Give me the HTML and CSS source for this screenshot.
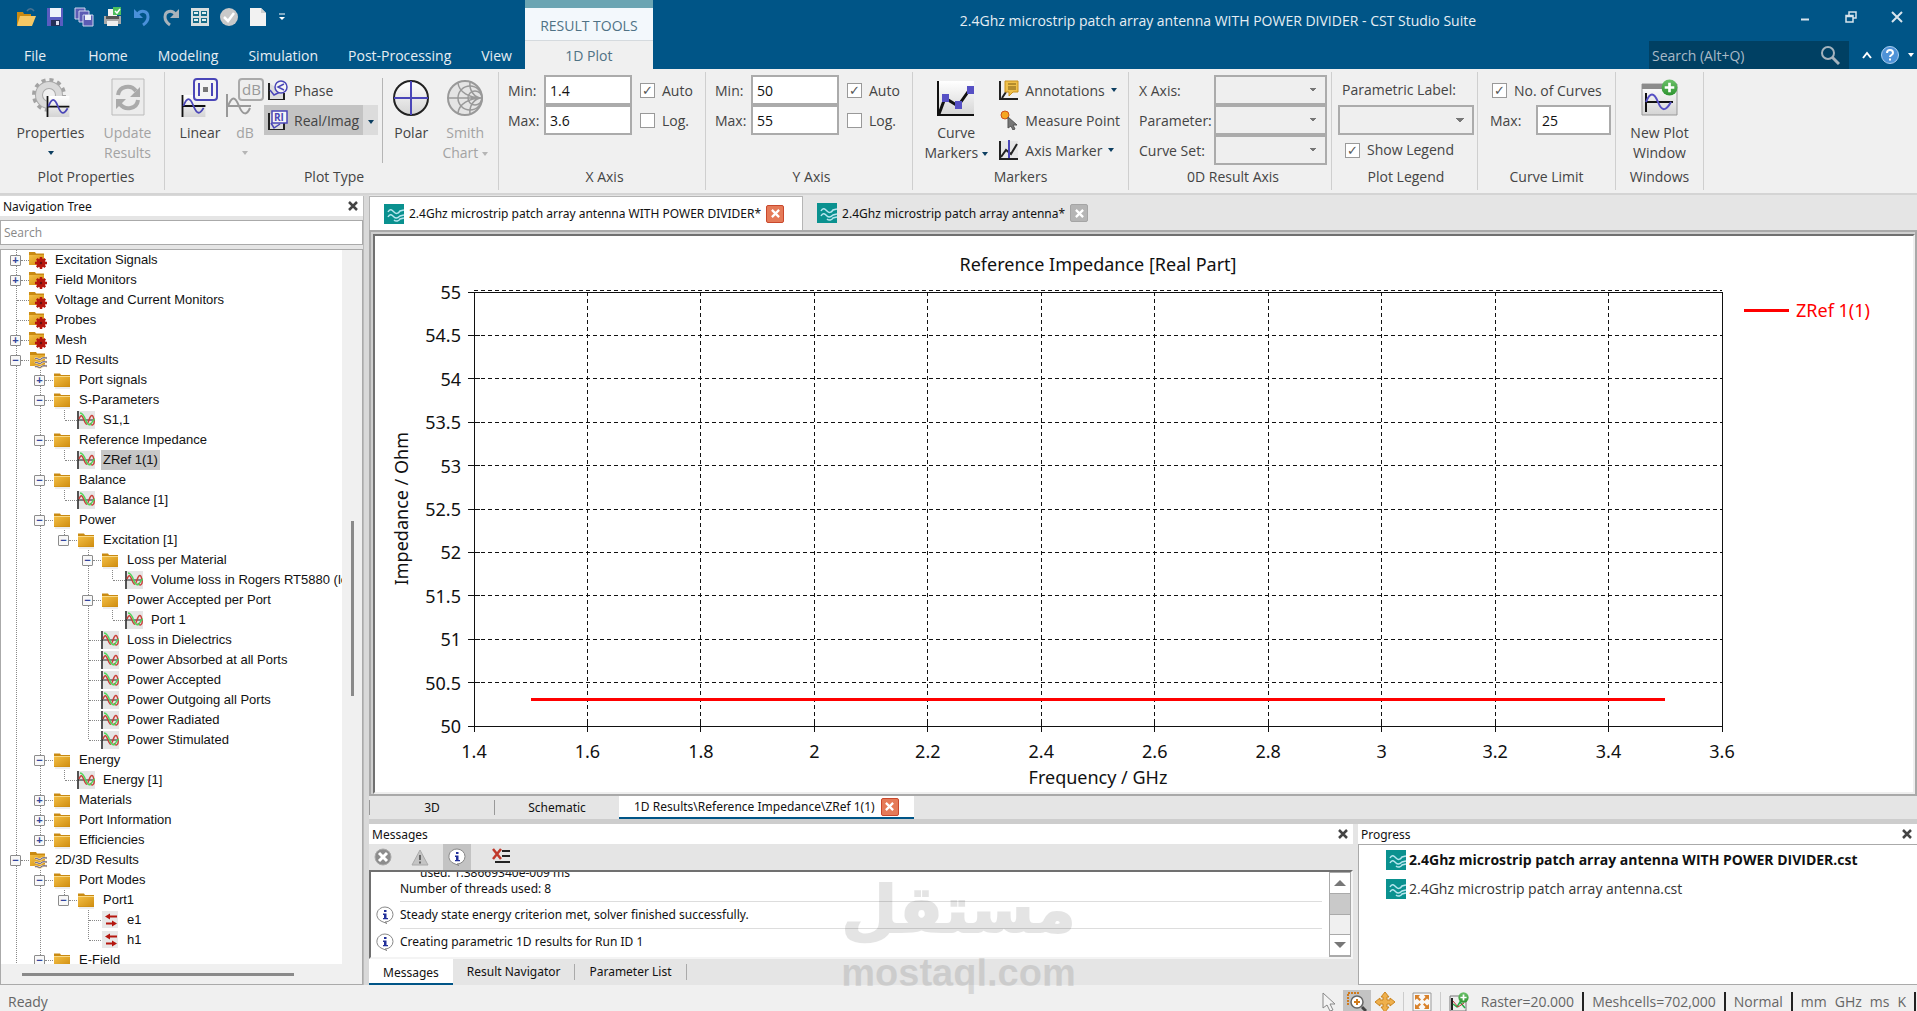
FILE: index.html
```html
<!DOCTYPE html>
<html lang="en">
<head>
    <meta charset="UTF-8">
    <meta name="viewport" content="width=device-width, initial-scale=1.0">
    <title>2.4Ghz microstrip patch array antenna WITH POWER DIVIDER - CST Studio Suite</title>
    <link rel="stylesheet" href="styles.css">
</head>
<body>
    <!-- shared icons -->
    <svg class="sprite" aria-hidden="true">
        <defs>
            <linearGradient id="gold" x1="0" y1="0" x2="1" y2="1">
                <stop offset="0" stop-color="#f4bf45"/><stop offset="1" stop-color="#d08e10"/>
            </linearGradient>
            <linearGradient id="silver" x1="0" y1="0" x2="0" y2="1">
                <stop offset="0" stop-color="#ffffff"/><stop offset="1" stop-color="#d4d4d4"/>
            </linearGradient>
            <linearGradient id="green" x1="0" y1="0" x2="0" y2="1">
                <stop offset="0" stop-color="#6cc26a"/><stop offset="1" stop-color="#2e9430"/>
            </linearGradient>
        </defs>
        <symbol id="folder" viewBox="0 0 18 18">
            <path d="M1 4V2.500h6l1 1.500h9V16H1z" fill="#c98a12"/>
            <path d="M1 5h16v10.500H1z" fill="url(#gold)"/>
            <path d="M1 5.500h16" stroke="#f8d987"/>
            <path d="M2 17h15" stroke="#ddd"/>
        </symbol>
        <symbol id="folder-gear" viewBox="0 0 18 18">
            <path d="M0 3V1h6l1 1.500h8V14H0z" fill="#c98a12"/>
            <path d="M0 4h15v10H0z" fill="url(#gold)"/>
            <path d="M12 6v12M6 12h12M7.800 7.800l8.400 8.400M16.200 7.800l-8.400 8.400" stroke="#b5170f" stroke-width="2.500"/>
            <circle cx="12" cy="12" r="3" fill="none" stroke="#b5170f" stroke-width="3"/>
            <circle cx="12" cy="12" r="1.200" fill="#611"/>
        </symbol>
        <symbol id="folder-wave" viewBox="0 0 18 18">
            <path d="M1 3V1h6l1 1.500h8V15H1z" fill="#c98a12"/>
            <path d="M1 4h15v11H1z" fill="url(#gold)"/>
            <path d="M6 8c2-2 4 2 6 0s4-1 6-1M6 12c2-2 4 2 6 0s4-1 6-1M6 16c2-2 4 2 6 0s4-1 6-1" fill="none" stroke="#f6dc9a" stroke-width="2.500"/>
            <path d="M6 8c2-2 4 2 6 0s4-1 6-1M6 12c2-2 4 2 6 0s4-1 6-1M6 16c2-2 4 2 6 0s4-1 6-1" fill="none" stroke="#4a4f9c"/>
        </symbol>
        <symbol id="curve" viewBox="0 0 18 18">
            <path d="M0 0h18v18H0z" fill="#e6e6e6"/>
            <path d="M1 0v18" stroke="#222" stroke-width="1.500"/>
            <path d="M1 9h17" stroke="#222"/>
            <path d="M2 8c2-5 3-4 5 1s3 6 5 0 4-6 5 0-3 6-4 3" fill="none" stroke="#c8423a" stroke-width="1.500"/>
            <path d="M3 2c3 0 5 5 6 8s4 5 5 3 2-4 4-5" fill="none" stroke="#4fd65c" stroke-width="1.500"/>
        </symbol>
        <symbol id="mode" viewBox="0 0 18 18">
            <path d="M1 0h16v17H1z" fill="#e8e8e8"/>
            <path d="M4 5.500l5-3v2h7v2H9v2zM16 12.500l-5-3v2H5v2h6v2z" fill="#b5170f"/>
        </symbol>
        <symbol id="cst" viewBox="0 0 20 20">
            <path d="M0 0h20v20H0z" fill="#0a918f"/>
            <path d="M4 8c2-4 4-2 6 0s4 2 6-1l4-1M4 13c2-4 4-2 6 0s4 1 6-1l4-1M10 16c2 2 5 1 6-1l4-1" fill="none" stroke="#b7e6ef" stroke-width="1.500"/>
        </symbol>
        <symbol id="cross" viewBox="0 0 10 10">
            <path d="M1 1l8 8M9 1l-8 8" stroke="currentColor" stroke-width="2.500"/>
        </symbol>
        <symbol id="info" viewBox="0 0 18 18">
            <path d="M9 1a8 7.500 0 1 1 0 15l2 1.500-5-2A8 7.500 0 0 1 9 1z" fill="#fff" stroke="#888"/>
            <path d="M8 4h2.500v2H8zM7 7.500h3.500V12H12v1.200H7V12h1V9H7z" fill="#22309a"/>
        </symbol>
        <symbol id="plus" viewBox="0 0 16 16">
            <circle cx="8" cy="8" r="7.500" fill="url(#green)"/>
            <path d="M8 3.500v9M3.500 8h9" stroke="#fff" stroke-width="2.500"/>
        </symbol>
        <symbol id="sine" viewBox="0 0 26 24">
            <path d="M0 0h26v24H0z" fill="url(#silver)"/>
            <path d="M1 0v24M0 12h26" stroke="#111" stroke-width="2"/>
            <path d="M2 12C6 2 9 2 13 12s7 9 11 2" fill="none" stroke="#4a46b8" stroke-width="2"/>
        </symbol>
    </svg>

    <header class="titlebar">
        <div class="quick">
            <button aria-label="Open"><svg viewBox="0 0 20 20"><path d="M1 5h6l1 2h7v11H1z" fill="#c98a12"/><path d="M4 9h16l-4 10H1z" fill="#f5c865"/><path d="M11 4c2-3 5-3 7 0" fill="none" stroke="#4c7391" stroke-width="1.500"/></svg></button>
            <button aria-label="Save"><svg viewBox="0 0 20 20"><path d="M2 1h16v18H2z" fill="#5a5cc0"/><path d="M5 1h11v9H5z" fill="#eef3fa"/><path d="M6 13h9v6H6z" fill="#253058"/><path d="M11 14h3v4h-3z" fill="#dde"/></svg></button>
            <button aria-label="Save all"><svg viewBox="0 0 20 20"><path d="M1 1h10v11H1z" fill="#5b5cb4" stroke="#cdd6ef"/><path d="M5 4h10v11H5z" fill="#5b5cb4" stroke="#cdd6ef"/><path d="M9 8h10v11H9z" fill="#5b5cb4" stroke="#cdd6ef"/><path d="M11 8h6v5h-6z" fill="#eef3fa"/></svg></button>
            <button aria-label="Print"><svg viewBox="0 0 20 20"><path d="M5 2h9v8H5z" fill="#f4f4f4"/><path d="M1 9h17v8H1z" fill="#a9a9a9"/><path d="M3 9h13v3H3z" fill="#555"/><path d="M4 14h11v5H4z" fill="#eee"/><path d="M10 0h8v8h-8z" fill="#4cbf5c"/><path d="M12 4l2 2 3-4" fill="none" stroke="#fff" stroke-width="1.500"/></svg></button>
            <button aria-label="Undo"><svg viewBox="0 0 20 20"><path d="M5 8c4-6 11-4 11 2 0 4-2 6-5 8" fill="none" stroke="#4a90d9" stroke-width="3"/><path d="M2 2v9h9z" fill="#4a90d9"/></svg></button>
            <button aria-label="Redo"><svg viewBox="0 0 20 20"><path d="M15 8C11 2 4 4 4 10c0 4 2 6 5 8" fill="none" stroke="#a9b3bb" stroke-width="3"/><path d="M18 2v9H9z" fill="#a9b3bb"/></svg></button>
            <button aria-label="Parameters"><svg viewBox="0 0 20 20"><path d="M1 1h18v18H1z" fill="#d9dedf"/><path d="M3 4h6v5H3zM11 4h6v5h-6zM3 11h6v5H3zM11 11h6v5h-6z" fill="#176b87"/><path d="M4 6h4M12 6h4M4 13h4M12 13h4" stroke="#dfeff2" stroke-width="2"/></svg></button>
            <button aria-label="Check"><svg viewBox="0 0 20 20"><circle cx="10" cy="10" r="9" fill="#c9c9c9"/><path d="M5 10l4 4 6-8" fill="none" stroke="#fff" stroke-width="2.500"/></svg></button>
            <button aria-label="New"><svg viewBox="0 0 20 20"><path d="M2 1h11l5 5v13H2z" fill="#f2f2f2"/><path d="M13 1v5h5" fill="#cfcfcf"/></svg></button>
            <button aria-label="Customize" class="tiny"><svg viewBox="0 0 10 10"><path d="M2 2h6" stroke="#fff"/><path d="M2 5h6L5 8z" fill="#fff"/></svg></button>
        </div>
        <h1 class="window-title">2.4Ghz microstrip patch array antenna WITH POWER DIVIDER - CST Studio Suite</h1>
        <div class="window-buttons">
            <button aria-label="Minimize"><svg viewBox="0 0 12 12"><path d="M2 8.500h8" stroke="#d8e4ec" stroke-width="2"/></svg></button>
            <button aria-label="Restore"><svg viewBox="0 0 12 12"><path d="M4 4V1h7v6H8M1 4.500h7V11H1zM1 5.500h7" fill="none" stroke="#d8e4ec" stroke-width="1.500"/></svg></button>
            <button aria-label="Close"><svg viewBox="0 0 12 12"><path d="M1 1l10 10M11 1L1 11" stroke="#d8e4ec" stroke-width="2"/></svg></button>
        </div>
        <nav class="menu">
            <a href="#" class="file">File</a>
            <a href="#">Home</a>
            <a href="#">Modeling</a>
            <a href="#">Simulation</a>
            <a href="#">Post-Processing</a>
            <a href="#">View</a>
        </nav>
        <div class="context-tab">
            <span>RESULT TOOLS</span>
            <a href="#">1D Plot</a>
        </div>
        <div class="help">
            <div class="command-search">
                <input type="text" placeholder="Search (Alt+Q)" aria-label="Search commands">
                <svg viewBox="0 0 20 20"><circle cx="8" cy="8" r="6" fill="none" stroke="#a4b3be" stroke-width="2"/><path d="M12 12l7 7" stroke="#a4b3be" stroke-width="3"/></svg>
            </div>
            <button aria-label="Collapse ribbon"><svg width="10" height="10" viewBox="0 0 10 10"><path d="M1 8l4-5 4 5" fill="none" stroke="#fff" stroke-width="2"/></svg></button>
            <button aria-label="Help"><svg width="18" height="18" viewBox="0 0 18 18"><circle cx="9" cy="9" r="8.500" fill="#4f93d8" stroke="#a9cdf0"/><path d="M6 7c0-4 6-4 6 0 0 2-3 2-3 4M9 12.500v2" fill="none" stroke="#fff" stroke-width="2"/></svg></button>
            <span class="caret light"></span>
        </div>
    </header>

    <section class="ribbon">
        <div class="group properties">
            <div class="tools">
                <button class="big">
                    <svg viewBox="0 0 40 40">
                        <circle cx="18" cy="17" r="15" fill="none" stroke="#a3a3a3" stroke-width="4" stroke-dasharray="4 3.850"/>
                        <circle cx="18" cy="17" r="10" fill="none" stroke="#a9a9a9" stroke-width="8"/>
                        <circle cx="18" cy="17" r="10" fill="none" stroke="#d9d9d9" stroke-width="6"/>
                        <use href="#sine" x="15" y="18" width="24" height="21"/>
                    </svg>
                    <span>Properties</span><span class="caret"></span>
                </button>
                <button class="big off">
                    <svg viewBox="0 0 40 40">
                        <path d="M4 1h32v36H4z" fill="#ececec" stroke="#bbb"/>
                        <path d="M10 17c1-9 13-11 18-4M30 22c-1 9-13 11-18 4" fill="none" stroke="#aaa" stroke-width="4"/>
                        <path d="M32 9v10H22zM8 31V21h10z" fill="#aaa"/>
                    </svg>
                    <span>Update<br>Results</span>
                </button>
            </div>
            <h2>Plot Properties</h2>
        </div>

        <div class="group type">
            <div class="tools">
                <button class="big">
                    <svg viewBox="0 0 40 40">
                        <use href="#sine" x="1" y="17" width="25" height="22"/>
                        <rect x="14" y="1" width="23" height="21" rx="3" fill="#f4f4f4" stroke="#4a46b8" stroke-width="2"/>
                        <path d="M19 5v13M32 5v13" stroke="#4a46b8" stroke-width="2"/><path d="M23 9h5v5h-5z" fill="#777"/>
                    </svg>
                    <span>Linear</span>
                </button>
                <button class="big off narrow">
                    <svg viewBox="0 0 40 40">
                        <path d="M2 16v23M1 28h25M3 28c4-10 7-10 11 0s8 9 11 2" fill="none" stroke="#999" stroke-width="2"/>
                        <rect x="14" y="1" width="24" height="21" rx="3" fill="#eee" stroke="#aaa" stroke-width="2"/>
                        <text x="17" y="17" font-size="15" fill="#999">dB</text>
                    </svg>
                    <span>dB</span><span class="caret"></span>
                </button>
                <div class="stack">
                    <button class="small">
                        <svg viewBox="0 0 20 20"><path d="M1 3v17h15v-7" fill="#ddd" stroke="#222" stroke-width="2"/><path d="M2 10l4 5 6-3" fill="none" stroke="#4a46b8" stroke-width="1.500"/><circle cx="13" cy="7" r="6" fill="#f6f6f6" stroke="#4a46b8" stroke-width="1.500"/><path d="M16 4l-6 3 6 3" fill="none" stroke="#4a46b8" stroke-width="1.500"/></svg>
                        Phase
                    </button>
                    <div class="split">
                        <button class="small">
                            <svg viewBox="0 0 20 20"><path d="M1 3v17h15v-7" fill="#ddd" stroke="#222" stroke-width="2"/><path d="M3 13l3 5 6-4" fill="none" stroke="#4a46b8" stroke-width="1.500"/><rect x="4" y="1" width="15" height="12" fill="#f6f6f6" stroke="#4a46b8" stroke-width="1.500"/><text x="6" y="11" font-size="10" font-weight="bold" fill="#4a46b8">RI</text></svg>
                            Real/Imag
                        </button>
                        <button class="more" aria-label="Real/Imag options"><span class="caret"></span></button>
                    </div>
                </div>
                <span class="divider"></span>
                <button class="big polar">
                    <svg viewBox="0 0 40 40"><circle cx="20" cy="20" r="17" fill="url(#silver)" stroke="#222" stroke-width="2"/><path d="M20 3v34M3 20h34" stroke="#4a46b8" stroke-width="2"/></svg>
                    <span>Polar</span>
                </button>
                <button class="big off smith">
                    <svg viewBox="0 0 40 40"><g fill="none" stroke="#999" stroke-width="1.500"><circle cx="20" cy="20" r="17" fill="#e4e4e4" stroke-width="2"/><circle cx="25" cy="20" r="12"/><circle cx="30" cy="20" r="7"/><path d="M3 20h34M37 20C24 20 14 14 13 5M37 20c-13 0-23 6-24 15M37 20C29 20 24 12 25 4M37 20c-8 0-13 8-12 16"/></g></svg>
                    <span>Smith<br>Chart <i class="caret"></i></span>
                </button>
            </div>
            <h2>Plot Type</h2>
        </div>

        <div class="group axis">
            <div class="tools fields">
                <label for="xmin">Min:</label><input type="text" id="xmin" value="1.4"><label class="check"><input type="checkbox" checked>Auto</label>
                <label for="xmax">Max:</label><input type="text" id="xmax" value="3.6"><label class="check"><input type="checkbox">Log.</label>
            </div>
            <h2>X Axis</h2>
        </div>

        <div class="group axis">
            <div class="tools fields">
                <label for="ymin">Min:</label><input type="text" id="ymin" value="50"><label class="check"><input type="checkbox" checked>Auto</label>
                <label for="ymax">Max:</label><input type="text" id="ymax" value="55"><label class="check"><input type="checkbox">Log.</label>
            </div>
            <h2>Y Axis</h2>
        </div>

        <div class="group markers">
            <div class="tools">
                <button class="big">
                    <svg viewBox="0 0 40 40"><path d="M2 3h36v35H2z" fill="url(#silver)"/><path d="M2 3v34h36" fill="none" stroke="#111" stroke-width="2"/><path d="M3 36l6-16 13 8L34 11" fill="none" stroke="#111" stroke-width="3"/><path d="M6 16h7v8H6zM19 23h7v8h-7zM31 8h7v8h-7z" fill="#5650c4"/></svg>
                    <span>Curve<br>Markers <i class="caret"></i></span>
                </button>
                <div class="stack">
                    <button class="small">
                        <svg viewBox="0 0 20 20"><path d="M1 1v18h18M3 18l4-6" fill="none" stroke="#222" stroke-width="2"/><path d="M6 1h13v11h-5l-4 4v-4H6z" fill="#efc04a" stroke="#c8901c"/><path d="M9 4h8M9 7h8M9 9h8" stroke="#7b5a13"/></svg>
                        Annotations <span class="caret"></span>
                    </button>
                    <button class="small">
                        <svg viewBox="0 0 20 20"><circle cx="6" cy="5" r="4" fill="#f5a623" stroke="#cf4f1c"/><path d="M9 7v11l3-2 2 4 2-1-2-4h4z" fill="#777" stroke="#555"/></svg>
                        Measure Point
                    </button>
                    <button class="small">
                        <svg viewBox="0 0 20 20"><path d="M1 1h18v18H1z" fill="#e6e6e6"/><path d="M1 1v18h18M2 17l5-7 5 4 6-10" fill="none" stroke="#222" stroke-width="2"/><path d="M10 0v18" stroke="#4a46b8" stroke-width="2"/></svg>
                        Axis Marker <span class="caret"></span>
                    </button>
                </div>
            </div>
            <h2>Markers</h2>
        </div>

        <div class="group result-axis">
            <div class="tools fields">
                <label for="rx">X Axis:</label><select id="rx"></select>
                <label for="rp">Parameter:</label><select id="rp"></select>
                <label for="rc">Curve Set:</label><select id="rc"></select>
            </div>
            <h2>0D Result Axis</h2>
        </div>

        <div class="group legend-group">
            <div class="tools stack">
                <label for="plabel">Parametric Label:</label>
                <select id="plabel"></select>
                <label class="check"><input type="checkbox" checked>Show Legend</label>
            </div>
            <h2>Plot Legend</h2>
        </div>

        <div class="group limit">
            <div class="tools stack">
                <label class="check"><input type="checkbox" checked>No. of Curves</label>
                <div class="limit-row"><label for="limit">Max:</label><input type="text" id="limit" value="25"></div>
            </div>
            <h2>Curve Limit</h2>
        </div>

        <div class="group windows">
            <div class="tools">
                <button class="big">
                    <svg viewBox="0 0 40 40"><path d="M2 6h35v31H2z" fill="url(#silver)" stroke="#999"/><path d="M2 6h35v5H2z" fill="#8c8c8c"/><path d="M6 15v19M5 24h28" stroke="#111" stroke-width="2"/><path d="M6 24c4-10 8-10 12 0s8 9 13 0" fill="none" stroke="#5650c4" stroke-width="2"/><use href="#plus" x="21" y="1" width="17" height="17"/></svg>
                    <span>New Plot<br>Window</span>
                </button>
            </div>
            <h2>Windows</h2>
        </div>
    </section>

    <main class="workspace">
        <aside class="nav">
            <div class="pane-title">Navigation Tree <button aria-label="Close navigation tree"><svg><use href="#cross"/></svg></button></div>
            <input class="tree-search" type="text" placeholder="Search" aria-label="Search tree">
            <div class="tree-box">
                <div class="tree">
                    <ul>
                        <li><div class="row"><button class="tg">+</button><svg><use href="#folder-gear"/></svg><span>Excitation Signals</span></div></li>
                        <li><div class="row"><button class="tg">+</button><svg><use href="#folder-gear"/></svg><span>Field Monitors</span></div></li>
                        <li><div class="row leaf"><svg><use href="#folder-gear"/></svg><span>Voltage and Current Monitors</span></div></li>
                        <li><div class="row leaf"><svg><use href="#folder-gear"/></svg><span>Probes</span></div></li>
                        <li><div class="row"><button class="tg">+</button><svg><use href="#folder-gear"/></svg><span>Mesh</span></div></li>
                        <li><div class="row"><button class="tg">−</button><svg><use href="#folder-wave"/></svg><span>1D Results</span></div>
                            <ul>
                                <li><div class="row"><button class="tg">+</button><svg><use href="#folder"/></svg><span>Port signals</span></div></li>
                                <li><div class="row"><button class="tg">−</button><svg><use href="#folder"/></svg><span>S-Parameters</span></div>
                                    <ul>
                                        <li><div class="row leaf"><svg><use href="#curve"/></svg><span>S1,1</span></div></li>
                                    </ul>
                                </li>
                                <li><div class="row"><button class="tg">−</button><svg><use href="#folder"/></svg><span>Reference Impedance</span></div>
                                    <ul>
                                        <li><div class="row leaf"><svg><use href="#curve"/></svg><span class="selected">ZRef 1(1)</span></div></li>
                                    </ul>
                                </li>
                                <li><div class="row"><button class="tg">−</button><svg><use href="#folder"/></svg><span>Balance</span></div>
                                    <ul>
                                        <li><div class="row leaf"><svg><use href="#curve"/></svg><span>Balance [1]</span></div></li>
                                    </ul>
                                </li>
                                <li><div class="row"><button class="tg">−</button><svg><use href="#folder"/></svg><span>Power</span></div>
                                    <ul>
                                        <li><div class="row"><button class="tg">−</button><svg><use href="#folder"/></svg><span>Excitation [1]</span></div>
                                            <ul>
                                                <li><div class="row"><button class="tg">−</button><svg><use href="#folder"/></svg><span>Loss per Material</span></div>
                                                    <ul>
                                                        <li><div class="row leaf"><svg><use href="#curve"/></svg><span>Volume loss in Rogers RT5880 (lossy)</span></div></li>
                                                    </ul>
                                                </li>
                                                <li><div class="row"><button class="tg">−</button><svg><use href="#folder"/></svg><span>Power Accepted per Port</span></div>
                                                    <ul>
                                                        <li><div class="row leaf"><svg><use href="#curve"/></svg><span>Port 1</span></div></li>
                                                    </ul>
                                                </li>
                                                <li><div class="row leaf"><svg><use href="#curve"/></svg><span>Loss in Dielectrics</span></div></li>
                                                <li><div class="row leaf"><svg><use href="#curve"/></svg><span>Power Absorbed at all Ports</span></div></li>
                                                <li><div class="row leaf"><svg><use href="#curve"/></svg><span>Power Accepted</span></div></li>
                                                <li><div class="row leaf"><svg><use href="#curve"/></svg><span>Power Outgoing all Ports</span></div></li>
                                                <li><div class="row leaf"><svg><use href="#curve"/></svg><span>Power Radiated</span></div></li>
                                                <li><div class="row leaf"><svg><use href="#curve"/></svg><span>Power Stimulated</span></div></li>
                                            </ul>
                                        </li>
                                    </ul>
                                </li>
                                <li><div class="row"><button class="tg">−</button><svg><use href="#folder"/></svg><span>Energy</span></div>
                                    <ul>
                                        <li><div class="row leaf"><svg><use href="#curve"/></svg><span>Energy [1]</span></div></li>
                                    </ul>
                                </li>
                                <li><div class="row"><button class="tg">+</button><svg><use href="#folder"/></svg><span>Materials</span></div></li>
                                <li><div class="row"><button class="tg">+</button><svg><use href="#folder"/></svg><span>Port Information</span></div></li>
                                <li><div class="row"><button class="tg">+</button><svg><use href="#folder"/></svg><span>Efficiencies</span></div></li>
                            </ul>
                        </li>
                        <li class="open-end"><div class="row"><button class="tg">−</button><svg><use href="#folder-wave"/></svg><span>2D/3D Results</span></div>
                            <ul>
                                <li><div class="row"><button class="tg">−</button><svg><use href="#folder"/></svg><span>Port Modes</span></div>
                                    <ul>
                                        <li><div class="row"><button class="tg">−</button><svg><use href="#folder"/></svg><span>Port1</span></div>
                                            <ul>
                                                <li><div class="row leaf"><svg><use href="#mode"/></svg><span>e1</span></div></li>
                                                <li><div class="row leaf"><svg><use href="#mode"/></svg><span>h1</span></div></li>
                                            </ul>
                                        </li>
                                    </ul>
                                </li>
                                <li class="open-end"><div class="row"><button class="tg">−</button><svg><use href="#folder"/></svg><span>E-Field</span></div></li>
                            </ul>
                        </li>
                    </ul>
                </div>
                <div class="vbar"></div>
                <div class="hbar"></div>
            </div>
        </aside>

        <section class="content">
            <div class="doc-tabs">
                <div class="doc-tab active">
                    <svg class="logo"><use href="#cst"/></svg>
                    <a href="#">2.4Ghz microstrip patch array antenna WITH POWER DIVIDER*</a>
                    <button class="close" aria-label="Close tab"><svg><use href="#cross"/></svg></button>
                </div>
                <div class="doc-tab">
                    <svg class="logo"><use href="#cst"/></svg>
                    <a href="#">2.4Ghz microstrip patch array antenna*</a>
                    <button class="close gray" aria-label="Close tab"><svg><use href="#cross"/></svg></button>
                </div>
            </div>

            <div class="chart-frame">
                <div class="chart">
                    <h3>Reference Impedance [Real Part]</h3>
                    <div class="y-title">Impedance / Ohm</div>
                    <div class="y-labels">
                        <span>55</span><span>54.5</span><span>54</span><span>53.5</span><span>53</span><span>52.5</span><span>52</span><span>51.5</span><span>51</span><span>50.5</span><span>50</span>
                    </div>
                    <svg class="plot" viewBox="0 0 1100 1000" preserveAspectRatio="none">
                        <path class="grid" d="M0 100H1100M0 200H1100M0 300H1100M0 400H1100M0 500H1100M0 600H1100M0 700H1100M0 800H1100M0 900H1100"/>
                        <path class="grid" d="M100 0V1000M200 0V1000M300 0V1000M400 0V1000M500 0V1000M600 0V1000M700 0V1000M800 0V1000M900 0V1000M1000 0V1000"/>
                        <path class="frame" d="M0 0H1100V1000H0z"/>
                        <path class="tick" d="M-5 0H5M-5 100H5M-5 200H5M-5 300H5M-5 400H5M-5 500H5M-5 600H5M-5 700H5M-5 800H5M-5 900H5M-5 1000H5"/>
                        <path class="tick" d="M0 987V1014M100 987V1014M200 987V1014M300 987V1014M400 987V1014M500 987V1014M600 987V1014M700 987V1014M800 987V1014M900 987V1014M1000 987V1014M1100 987V1014"/>
                        <path class="grid" d="M0 -3H1100"/>
                        <path class="trace" d="M50 938H1050"/>
                    </svg>
                    <div class="legend"><span class="key"></span>ZRef 1(1)</div>
                    <div class="x-labels">
                        <span>1.4</span><span>1.6</span><span>1.8</span><span>2</span><span>2.2</span><span>2.4</span><span>2.6</span><span>2.8</span><span>3</span><span>3.2</span><span>3.4</span><span>3.6</span>
                    </div>
                    <div class="x-title">Frequency / GHz</div>
                </div>
            </div>

            <div class="view-tabs">
                <a href="#">3D</a>
                <a href="#">Schematic</a>
                <div class="view-tab active">
                    <a href="#">1D Results\Reference Impedance\ZRef 1(1)</a>
                    <button class="close" aria-label="Close view"><svg><use href="#cross"/></svg></button>
                </div>
            </div>

            <div class="docks">
                <section class="messages">
                    <div class="pane-title">Messages <button aria-label="Close messages"><svg><use href="#cross"/></svg></button></div>
                    <div class="message-tools">
                        <button aria-label="Errors"><svg viewBox="0 0 18 18"><circle cx="9" cy="9" r="8" fill="#8c8c8c" stroke="#aaa"/><path d="M5 5l8 8M13 5l-8 8" stroke="#fff" stroke-width="3"/></svg></button>
                        <button aria-label="Warnings"><svg viewBox="0 0 18 18"><path d="M9 2l8 15H1z" fill="#c4c4c4" stroke="#aaa"/><path d="M9 7v5M9 13.500v2" stroke="#666" stroke-width="2"/></svg></button>
                        <button aria-label="Information" class="on"><svg viewBox="0 0 18 18"><use href="#info"/></svg></button>
                        <button aria-label="Clear messages"><svg viewBox="0 0 18 18"><path d="M10 3h8M10 8h8M3 14h15" stroke="#222" stroke-width="2"/><path d="M1 1l8 10M9 1L1 11" stroke="#c0392b" stroke-width="2.500"/></svg></button>
                    </div>
                    <div class="message-box">
                        <ul class="message-list">
                            <li class="plain"><p class="sub">used: 1.38669340e-009 ms</p><p>Number of threads used: 8</p></li>
                            <li><svg><use href="#info"/></svg><p>Steady state energy criterion met, solver finished successfully.</p></li>
                            <li><svg><use href="#info"/></svg><p>Creating parametric 1D results for Run ID 1</p></li>
                        </ul>
                        <div class="scroller">
                            <button aria-label="Scroll up"><svg viewBox="0 0 12 8"><path d="M0 7l6-6 6 6z" fill="#777"/></svg></button>
                            <span class="thumb"></span><span class="track"></span>
                            <button aria-label="Scroll down"><svg viewBox="0 0 12 8"><path d="M0 1l6 6 6-6z" fill="#777"/></svg></button>
                        </div>
                    </div>
                    <div class="dock-tabs">
                        <a href="#" class="active">Messages</a>
                        <a href="#">Result Navigator</a>
                        <a href="#">Parameter List</a>
                    </div>
                </section>
                <section class="progress">
                    <div class="pane-title">Progress <button aria-label="Close progress"><svg><use href="#cross"/></svg></button></div>
                    <ul class="jobs">
                        <li class="current"><svg><use href="#cst"/></svg>2.4Ghz microstrip patch array antenna WITH POWER DIVIDER.cst</li>
                        <li><svg><use href="#cst"/></svg>2.4Ghz microstrip patch array antenna.cst</li>
                    </ul>
                </section>
            </div>
        </section>
    </main>

    <footer class="status">
        <span class="ready">Ready</span>
        <button aria-label="Select"><svg viewBox="0 0 20 20"><path d="M4 1v15l4-3 3 6 3-1-3-6h5z" fill="#f4f4f4" stroke="#888"/></svg></button>
        <button aria-label="Zoom" class="on"><svg viewBox="0 0 20 20"><path d="M1 13V1h12" fill="none" stroke="#d07a1c" stroke-width="2" stroke-dasharray="2 1"/><circle cx="10" cy="10" r="6" fill="#fff" stroke="#666" stroke-width="1.500"/><path d="M10 7v6M7 10h6" stroke="#d07a1c" stroke-width="2"/><path d="M15 15l4 4" stroke="#444" stroke-width="3"/></svg></button>
        <button aria-label="Pan"><svg viewBox="0 0 20 20"><path d="M10 0l4 5h-2v3h3V6l5 4-5 4v-2h-3v3h2l-4 5-4-5h2v-3H5v2l-5-4 5-4v2h3V5H6z" fill="#efb04c" stroke="#c98420"/></svg></button>
        <span class="bar light"></span>
        <button aria-label="Fit view"><svg viewBox="0 0 20 20"><path d="M1 1h18v18H1z" fill="#f8f8f8" stroke="#999"/><path d="M3 3h5L6.500 5 9 7.500 7.500 9 5 6.500 3 8zM17 3v5l-2-1.500L12.500 9 11 7.500 13.500 5 12 3zM3 17v-5l2 1.500L7.500 11 9 12.500 6.500 15 8 17zM17 17h-5l1.500-2-2.500-2.500 1.500-1.500 2.500 2.500 2-1.500z" fill="#d9822b"/></svg></button>
        <span class="bar light"></span>
        <button aria-label="New plot"><svg viewBox="0 0 20 20"><path d="M1 4h16v15H1z" fill="#eee" stroke="#777"/><path d="M3 6v12" stroke="#222" stroke-width="2"/><path d="M4 12l4 3 3-5 5 6" fill="none" stroke="#2a4" stroke-width="1.500"/><path d="M4 9l5 6 6-4" fill="none" stroke="#b33"/><use href="#plus" x="9" y="0" width="11" height="11"/></svg></button>
        <span class="item">Raster=20.000</span>
        <span class="bar"></span>
        <span class="item">Meshcells=702,000</span>
        <span class="bar"></span>
        <span class="item">Normal</span>
        <span class="bar"></span>
        <span class="item units"><span>mm</span><span>GHz</span><span>ms</span><span>K</span></span>
        <span class="bar"></span>
    </footer>

    <div class="watermark" aria-hidden="true">
        <span class="mark-ar" lang="ar">مستقل</span>
        <span class="mark-en">mostaql.com</span>
    </div>
</body>
</html>
```
FILE: styles.css
```css
* {
    box-sizing: border-box;
}
body {
    margin: 0;
    height: 100vh;
    display: flex;
    flex-direction: column;
    overflow: hidden;
    font-family: "Open Sans", "Noto Sans", sans-serif;
    font-size: 14px;
    color: #444;
    background-color: #f0f0f0;
}
h1, h2, h3, p, ul {
    margin: 0;
    padding: 0;
    font-weight: normal;
    list-style: none;
}
button {
    border: none;
    padding: 0;
    background: none;
    font: inherit;
    color: inherit;
}
a {
    color: inherit;
    text-decoration: none;
}
input, select {
    font: inherit;
    color: #111;
    border-radius: 0;
}
svg {
    display: block;
    flex: none;
}
.sprite {
    width: 0;
    height: 0;
    position: absolute;
}
.caret {
    display: inline-block;
    border: 3px solid transparent;
    border-top: 4px solid #0d3f61;
    border-bottom: none;
    vertical-align: middle;
}
.caret.light {
    border-top-color: #fff;
}

/* title bar */
.titlebar {
    display: grid;
    grid-template-columns: auto 128px 1fr auto;
    grid-template-rows: 34px 35px;
    flex: none;
    background-color: #005587;
    color: #e6eef4;
}
.quick {
    grid-area: 1 / 1;
    display: flex;
    align-items: center;
    gap: 9px;
    padding-left: 16px;
}
.quick svg {
    width: 20px;
    height: 20px;
}
.quick .tiny svg {
    width: 10px;
    height: 10px;
}
.window-title {
    grid-area: 1 / 3 / 2 / 5;
    align-self: center;
    justify-self: center;
    padding-top: 6px;
    padding-right: 134px;
    font-size: 14px;
}
.window-buttons {
    grid-area: 1 / 4;
    display: flex;
    align-items: center;
    justify-content: flex-end;
    gap: 34px;
    padding-right: 14px;
}
.window-buttons svg {
    width: 12px;
    height: 12px;
}
.menu {
    grid-area: 2 / 1;
    display: flex;
    align-items: center;
    gap: 30px;
    padding: 8px 13px 0 24px;
}
.menu .file {
    margin-right: 12px;
}
.context-tab {
    grid-area: 1 / 2 / 3 / 3;
    display: flex;
    flex-direction: column;
    border-top: 8px solid #6ba5b3;
    background-color: #f3f8fc;
    color: #4f7285;
    text-align: center;
}
.context-tab span {
    height: 32px;
    line-height: 36px;
}
.context-tab a {
    flex: 1;
    line-height: 30px;
    border-top: 1px solid #d5dade;
    background-color: #f0f0f0;
}
.help {
    grid-area: 2 / 4;
    display: flex;
    align-items: center;
    gap: 9px;
    padding: 7px 3px 0 0;
}
.command-search {
    display: flex;
    align-items: center;
    align-self: stretch;
    width: 200px;
    margin-right: 4px;
    padding: 0 9px 0 3px;
    background-color: #004063;
}
.command-search input {
    flex: 1;
    min-width: 0;
    border: none;
    padding: 0;
    background: none;
    color: #fff;
}
.command-search input::placeholder {
    color: #a9bac7;
}
.command-search svg {
    width: 20px;
    height: 20px;
}

/* ribbon */
.ribbon {
    display: flex;
    flex: none;
    height: 126px;
    padding: 3px 0;
    border-bottom: 2px solid #d4d4d4;
}
.group {
    display: flex;
    flex-direction: column;
    justify-content: space-between;
    border-right: 1px solid #cfcfcf;
    padding: 3px 4px 2px;
}
.group h2 {
    font-size: 14px;
    line-height: 22px;
    text-align: center;
}
.tools {
    display: flex;
}
.tools svg text {
    font-family: "Open Sans", sans-serif;
}
.big {
    display: flex;
    flex-direction: column;
    align-items: center;
    width: 78px;
    padding-top: 3px;
    line-height: 20px;
    white-space: nowrap;
}
.big svg {
    width: 40px;
    height: 40px;
    margin-bottom: 5px;
}
.big > .caret {
    margin-top: 8px;
}
.narrow {
    width: 38px;
}
.off {
    color: #a3a3a3;
}
.off .caret {
    border-top-color: #b5b5b5;
}
.stack {
    display: flex;
    flex-direction: column;
}
.small {
    display: flex;
    align-items: center;
    height: 30px;
    gap: 6px;
    padding: 0 4px;
    white-space: nowrap;
}
.small svg {
    width: 20px;
    height: 20px;
}
.split {
    display: flex;
    background-color: #dcdcdc;
}
.split .small {
    background-color: #c3c3c3;
}
.more {
    width: 15px;
}
.divider {
    width: 1px;
    margin: 3px 0 0 4px;
    background-color: #b5b5b5;
}
.polar {
    width: 56px;
}
.smith {
    width: 52px;
}
.properties {
    width: 165px;
    padding-left: 12px;
}
.properties .tools {
    margin-right: -6px;
}
.type {
    width: 334px;
    padding-left: 9px;
}
.type .big:first-child {
    width: 52px;
}
.fields {
    display: grid;
    grid-auto-rows: 30px;
    align-items: center;
}
.fields input[type="text"], .fields select, .legend-group select, .limit-row input {
    width: 100%;
    height: 30px;
    border: 2px solid #ababab;
    padding: 0 4px;
    background-color: #fff;
}
.ribbon select {
    appearance: none;
    background: linear-gradient(45deg, transparent 50%, #777 50%) right 12px center / 4px 4px no-repeat,
        linear-gradient(315deg, transparent 50%, #777 50%) right 8px center / 4px 4px no-repeat, #efefef;
}
.axis {
    width: 207px;
    padding-left: 9px;
}
.axis .fields {
    grid-template-columns: 36px 88px 1fr;
}
.check {
    display: flex;
    align-items: center;
    gap: 7px;
    height: 30px;
    padding-left: 8px;
}
.check input {
    appearance: none;
    width: 15px;
    height: 15px;
    margin: 0;
    border: 1px solid #999;
    background-color: #fff;
    font: 13px/13px "DejaVu Sans", sans-serif;
    color: #555;
    text-align: center;
}
.check input:checked::before {
    content: "✓";
}
.markers {
    width: 216px;
}
.markers .big {
    width: 82px;
}
.result-axis {
    width: 203px;
    padding-left: 10px;
}
.result-axis .fields {
    grid-template-columns: 75px 1fr;
}
.legend-group {
    width: 146px;
    padding-left: 6px;
    padding-right: 3px;
}
.legend-group label {
    height: 30px;
    line-height: 30px;
    padding-left: 4px;
}
.legend-group .check {
    padding-left: 7px;
}
.limit {
    width: 138px;
}
.limit .check {
    padding-left: 10px;
}
.limit-row {
    display: grid;
    grid-template-columns: 46px 1fr;
    align-items: center;
    padding-left: 8px;
}
.windows {
    width: 88px;
}
.windows h2, .windows .tools {
    align-self: center;
}

/* panes */
.workspace {
    display: flex;
    flex: 1;
    min-height: 0;
    background-color: #d9d9d9;
}
.pane-title {
    display: flex;
    justify-content: space-between;
    align-items: center;
    flex: none;
    height: 20px;
    padding: 0 5px 0 3px;
    background-color: #fff;
    font: 12px "Noto Sans", sans-serif;
    color: #111;
}
.pane-title svg {
    width: 10px;
    height: 10px;
    color: #444;
}
.nav {
    display: flex;
    flex-direction: column;
    flex: none;
    width: 364px;
    margin-top: 1px;
    border-right: 1px solid #bbb;
    background-color: #e5e5e5;
}
.tree-search {
    flex: none;
    height: 25px;
    margin: 4px 0;
    border: 1px solid #aaa;
    padding: 0 3px;
    background-color: #fff;
    font-size: 12px;
}
.tree-search::placeholder {
    color: #888;
}
.tree-box {
    display: grid;
    grid-template-columns: minmax(0, 1fr) 20px;
    grid-template-rows: minmax(0, 1fr) 20px;
    flex: 1;
    min-height: 0;
    border: 1px solid #aaa;
    background-color: #f0f0f0;
}
.tree {
    overflow: hidden;
    background-color: #fff;
    font-family: "Liberation Sans", Arial, sans-serif;
    font-size: 13px;
    color: #111;
    white-space: nowrap;
}
.tree ul ul {
    margin-left: 24px;
}
.tree li {
    background: repeating-linear-gradient(#888 0 1px, transparent 1px 2px) 15px 0 / 1px 100% no-repeat;
}
.tree li:last-child {
    background-size: 1px 10px;
}
.tree li.open-end {
    background-size: 1px 100%;
}
.row {
    display: flex;
    align-items: center;
    height: 20px;
    padding-left: 9px;
}
.row svg {
    width: 18px;
    height: 18px;
    margin-right: 6px;
}
.row span {
    flex: none;
    line-height: 20px;
    padding: 0 2px;
}
.row .selected {
    background-color: #c6c6c6;
}
.row::before {
    content: "";
    flex: none;
    order: 1;
    width: 8px;
    border-top: 1px dotted #888;
}
.row svg, .row span {
    order: 2;
}
.row.leaf {
    padding-left: 16px;
}
.row.leaf::before {
    width: 12px;
}
.tg {
    width: 11px;
    height: 11px;
    border: 1px solid #8c8c8c;
    border-radius: 1px;
    background-color: #f8f8f8;
    font: bold 11px/8px "Liberation Sans", sans-serif;
    color: #33459c;
    text-align: center;
}
.vbar {
    align-self: start;
    justify-self: center;
    width: 3px;
    height: 175px;
    margin-top: 271px;
    background-color: #8a8a8a;
}
.hbar {
    align-self: center;
    width: 272px;
    height: 3px;
    margin-left: 21px;
    background-color: #8a8a8a;
}

/* documents */
.content {
    display: flex;
    flex-direction: column;
    flex: 1;
    min-width: 0;
    margin-left: 5px;
    background-color: #e5e5e5;
    font: 12px "Noto Sans", sans-serif;
    color: #111;
}
.doc-tabs {
    display: flex;
    flex: none;
    height: 35px;
    padding-top: 1px;
}
.doc-tab {
    display: flex;
    align-items: center;
    gap: 5px;
    padding: 0 18px 0 14px;
}
.doc-tab.active {
    border: 1px solid #b5b5b5;
    border-bottom: none;
    background-color: #fff;
}
.logo {
    width: 20px;
    height: 20px;
}
.close {
    display: flex;
    align-items: center;
    justify-content: center;
    width: 18px;
    height: 18px;
    border: 1px solid #c9482c;
    border-radius: 2px;
    background-color: #e57a58;
    color: #fff;
}
.close svg {
    width: 9px;
    height: 9px;
}
.close.gray {
    border-color: #a5a5a5;
    background-color: #b5b5b5;
}
.chart-frame {
    display: flex;
    flex: 1;
    min-height: 0;
    border: 2px solid #a9a9a9;
    padding: 2px 0 0 2px;
    background-color: #cfcfcf;
}
.chart {
    display: grid;
    grid-template-columns: 38px 61px 1fr 191px;
    grid-template-rows: 56px 1fr 35px 31px;
    flex: 1;
    border: 2px solid #efefef;
    border-top-color: #707070;
    border-left-color: #707070;
    background-color: #fff;
    font-size: 18px;
}
.chart h3 {
    grid-area: 1 / 3;
    align-self: center;
    font-size: 18px;
    text-align: center;
}
.y-title {
    grid-area: 2 / 1;
    justify-self: end;
    align-self: center;
    writing-mode: vertical-rl;
    transform: rotate(180deg);
}
.y-labels {
    grid-area: 2 / 2;
    display: flex;
    flex-direction: column;
    justify-content: space-between;
    padding-right: 13px;
    text-align: right;
}
.y-labels span {
    height: 0;
    line-height: 0;
}
.plot {
    grid-area: 2 / 3;
    width: 100%;
    height: 100%;
    min-height: 0;
    overflow: visible;
}
.plot path {
    fill: none;
    stroke: #111;
    stroke-width: 1;
    vector-effect: non-scaling-stroke;
    shape-rendering: crispEdges;
}
.plot .grid {
    stroke-dasharray: 4 3;
}
.plot .trace {
    stroke: #f00;
    stroke-width: 3;
}
.x-labels {
    grid-area: 3 / 3;
    display: flex;
    justify-content: space-between;
    align-items: flex-end;
}
.x-labels span {
    display: flex;
    justify-content: center;
    width: 0;
    line-height: 20px;
}
.x-title {
    grid-area: 4 / 3;
    line-height: 32px;
    text-align: center;
}
.legend {
    grid-area: 2 / 4;
    display: flex;
    align-items: center;
    align-self: start;
    gap: 7px;
    height: 36px;
    padding-left: 22px;
    color: #f00;
}
.key {
    width: 45px;
    height: 3px;
    background-color: #f00;
}
.view-tabs {
    display: flex;
    flex: none;
    height: 24px;
    border-bottom: 1px solid #cdcdcd;
}
.view-tabs > a {
    width: 125px;
    margin: 4px 0;
    border-left: 1px solid #999;
    line-height: 15px;
    text-align: center;
}
.view-tab {
    display: flex;
    align-items: center;
    gap: 6px;
    padding: 0 15px;
    border-bottom: 2px solid #005587;
    background-color: #fff;
}

/* bottom docks */
.docks {
    display: grid;
    grid-template-columns: 984fr 559fr;
    gap: 5px;
    flex: none;
    border-top: 4px solid #cdcdcd;
}
.messages {
    min-width: 0;
}
.message-tools {
    display: flex;
    gap: 9px;
    height: 26px;
}
.message-tools button {
    width: 28px;
    padding: 4px 5px;
}
.message-tools button:last-child {
    margin-left: 7px;
}
.message-tools .on, .status .on {
    background-color: #c3c3c3;
}
.message-tools svg {
    width: 18px;
    height: 18px;
}
.message-box {
    display: flex;
    height: 89px;
    border: 2px solid #707070;
    border-right-color: #f4f4f4;
    border-bottom-color: #f4f4f4;
    background-color: #fff;
}
.message-list {
    display: flex;
    flex-direction: column;
    justify-content: flex-end;
    flex: 1;
    height: 85px;
    padding: 0 7px 2px 0;
    overflow: hidden;
}
.message-list li {
    display: grid;
    grid-template-columns: 24px 1fr;
    align-items: center;
    flex: none;
    height: 27px;
    padding-left: 5px;
}
.message-list li p {
    line-height: 16px;
}
.message-list li + li p {
    padding: 5px 0;
    border-top: 1px solid #ddd;
}
.message-list .plain {
    display: block;
    height: 36px;
    padding-left: 29px;
}
.message-list .plain .sub {
    padding-left: 20px;
}
.message-list svg {
    width: 18px;
    height: 18px;
}
.scroller {
    display: flex;
    flex-direction: column;
    width: 22px;
    border: 1px solid #aaa;
}
.scroller > * {
    display: flex;
    align-items: center;
    justify-content: center;
    flex: 1;
    border-bottom: 1px solid #aaa;
}
.scroller svg {
    width: 12px;
    height: 8px;
}
.thumb {
    background-color: #c9c9c9;
}
.track {
    background-color: #f0f0f0;
}
.dock-tabs {
    display: flex;
    align-items: center;
    height: 26px;
}
.dock-tabs a {
    padding: 0 14px;
    border-right: 1px solid #aaa;
    line-height: 16px;
}
.dock-tabs .active {
    align-self: stretch;
    border-right: none;
    border-bottom: 2px solid #005587;
    background-color: #fff;
    line-height: 27px;
}
.progress {
    display: flex;
    flex-direction: column;
    min-width: 0;
}
.jobs {
    flex: 1;
    padding-left: 27px;
    border: 1px solid #aaa;
    border-right: none;
    background-color: #fff;
    font: 14px "Open Sans", sans-serif;
}
.jobs li {
    display: flex;
    align-items: center;
    gap: 3px;
    height: 29px;
    white-space: nowrap;
    color: #333;
}
.jobs .current {
    font-weight: bold;
    color: #111;
}
.jobs svg {
    width: 20px;
    height: 20px;
}

/* status bar */
.status {
    display: flex;
    align-items: center;
    flex: none;
    height: 26px;
    padding: 7px 1px 0 8px;
    color: #666;
}
.ready {
    flex: 1;
}
.status button {
    padding: 2px 4px;
}
.status svg {
    width: 20px;
    height: 20px;
}
.bar {
    width: 2px;
    height: 20px;
    background-color: #222;
}
.bar.light {
    width: 1px;
    margin: 0 4px;
    background-color: #ccc;
}
.item {
    padding: 0 8px;
}
.units {
    display: flex;
    gap: 8px;
}

.watermark {
    position: absolute;
    left: 50%;
    bottom: 18px;
    transform: translateX(-50%);
    display: flex;
    flex-direction: column;
    align-items: center;
    color: #000;
    opacity: 0.1;
    pointer-events: none;
}
.mark-ar {
    font: bold 64px/86px "DejaVu Sans", sans-serif;
    -webkit-text-stroke: 2px #000;
}
.mark-en {
    font: bold 38px/40px "Liberation Sans", sans-serif;
}
```
